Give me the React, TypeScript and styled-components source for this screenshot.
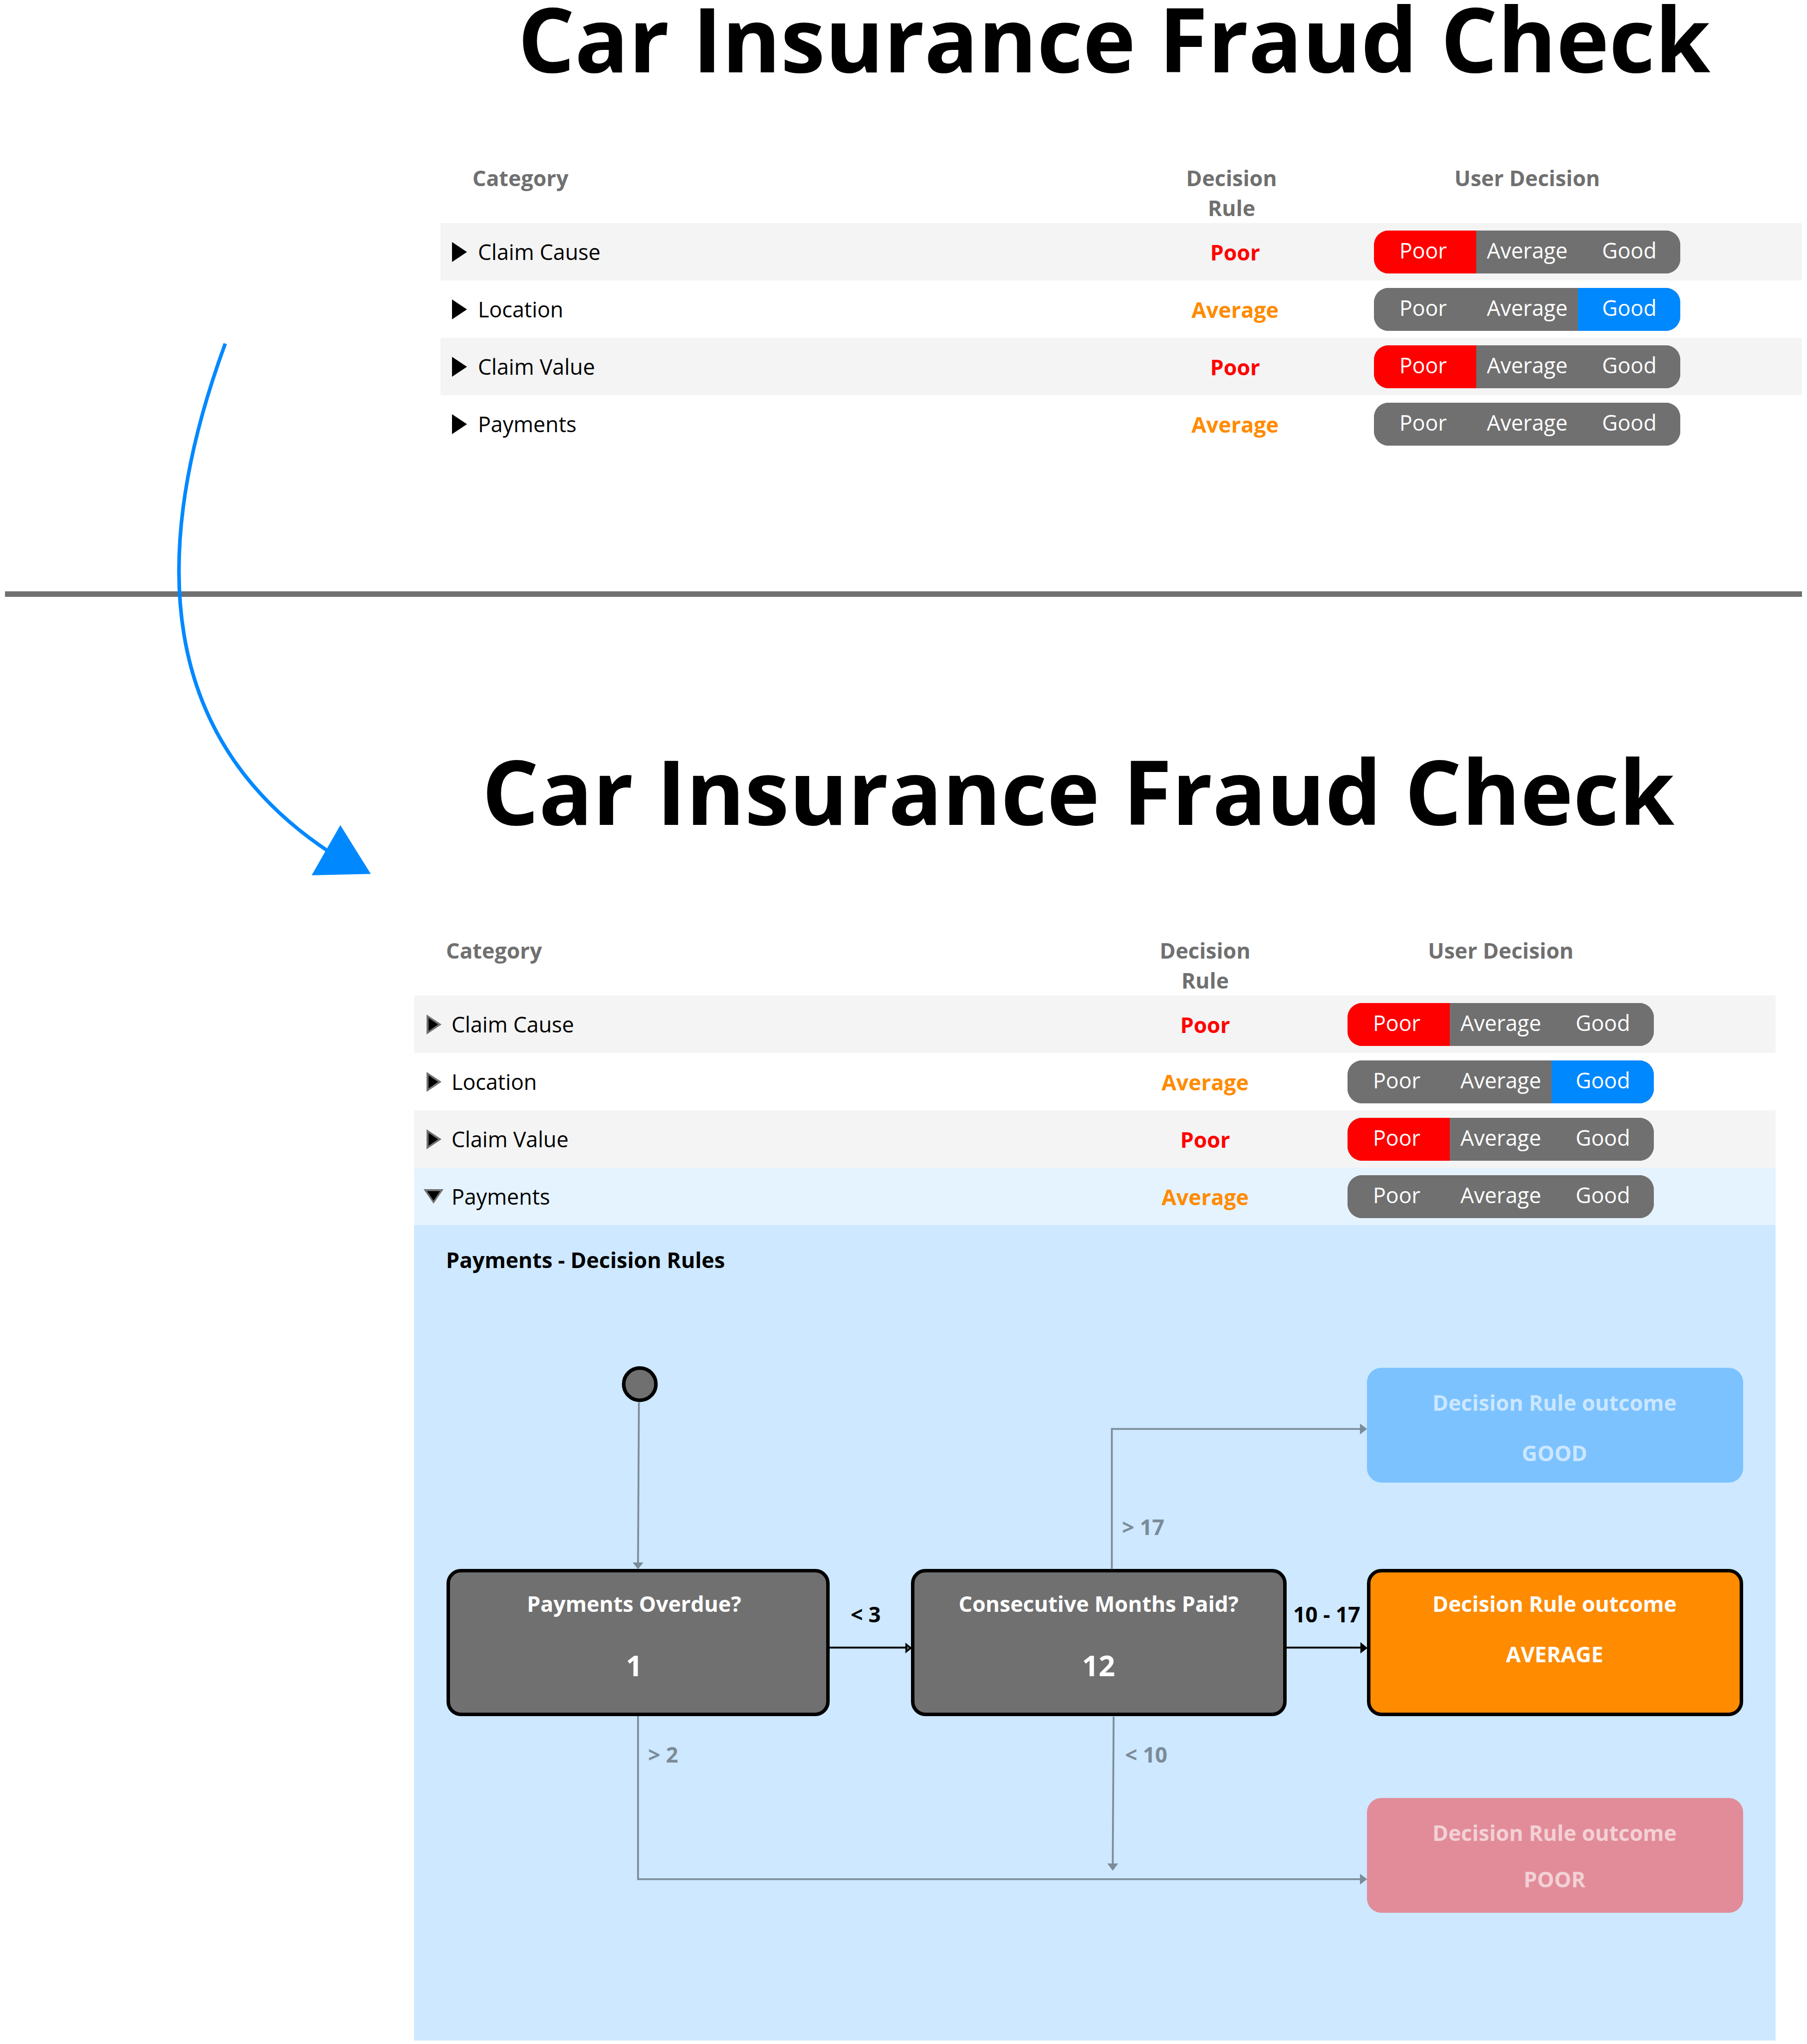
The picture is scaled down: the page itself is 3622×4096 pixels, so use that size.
import React, { useState } from 'react';
import styled, { createGlobalStyle } from 'styled-components';

const color = {
  ink: '#000000',
  grey: '#707070',
  stripe: '#f4f4f4',
  open: '#e5f3ff',
  panel: '#cde8ff',
  red: '#ff0000',
  orange: '#ff8b00',
  blue: '#0088ff',
  faded: '#7b8b99',
};

const Global = createGlobalStyle`
  *, *::before, *::after { box-sizing: border-box; }
  body {
    margin: 0;
    background: #ffffff;
    color: ${color.ink};
    font-family: "Open Sans", "Noto Sans", sans-serif;
    font-size: 43px;
    line-height: 60px;
  }
`;

const Page = styled.main`
  position: relative;
`;

const Screen = styled.section<{ $left: number; $right: number }>`
  padding-left: ${(p) => p.$left}px;
  padding-right: ${(p) => p.$right}px;
`;

const Title = styled.h1<{ $indent: number; $gap: number }>`
  margin: 0 0 ${(p) => p.$gap}px ${(p) => p.$indent}px;
  font-size: 179px;
  line-height: 152px;
  font-weight: 700;
  white-space: nowrap;
`;

const Divider = styled.hr`
  height: 11px;
  margin: 278px 10px 312px;
  border: 0;
  background: ${color.grey};
`;

const Table = styled.table`
  width: 100%;
  table-layout: fixed;
  border-collapse: collapse;
`;

const HeadCell = styled.th<{ $width: string; $align?: 'left' | 'center' }>`
  width: ${(p) => p.$width};
  padding: 2px 0 0 ${(p) => (p.$align === 'left' ? 64 : 0)}px;
  color: ${color.grey};
  font-weight: 700;
  text-align: ${(p) => p.$align ?? 'center'};
  vertical-align: top;
`;

const Row = styled.tr<{ $fill: string }>`
  height: 115px;
  background: ${(p) => p.$fill};
`;

const Cell = styled.td`
  padding: 0;
  vertical-align: middle;
`;

const RuleCell = styled(Cell)<{ $tone: string; $shift: number }>`
  padding: 2px 0 0 ${(p) => p.$shift}px;
  color: ${(p) => p.$tone};
  font-weight: 700;
  text-align: center;
`;

const DecisionBox = styled.div`
  width: 614px;
  margin-left: 171px;
`;

const Expander = styled.button`
  display: grid;
  grid-template-columns: 53px auto;
  align-items: center;
  padding: 0 0 0 22px;
  border: 0;
  background: none;
  color: inherit;
  font: inherit;
  cursor: pointer;
`;

const Marker = styled.svg`
  display: block;
  width: 34px;
  height: 40px;
  margin-left: 1px;
  overflow: visible;
`;

const Pill = styled.div`
  display: grid;
  grid-template-columns: repeat(3, 1fr);
  height: 86px;
  border-radius: 29px;
  overflow: hidden;
  background: ${color.grey};
`;

const Choice = styled.button<{ $fill: string }>`
  padding: 0 0 5px;
  border: 0;
  background: ${(p) => p.$fill};
  color: #ffffff;
  font: inherit;
  cursor: pointer;

  &:first-child {
    padding-right: 8px;
  }
`;

const PanelCell = styled.td`
  position: relative;
  height: 1634px;
  padding: 40px 64px;
  background: ${color.panel};
  vertical-align: top;
`;

const PanelTitle = styled.h2`
  margin: 0;
  font-size: 43px;
  line-height: 60px;
  font-weight: 700;
`;

const Wires = styled.svg`
  position: absolute;
  inset: 0;
  width: 100%;
  height: 100%;
`;

const Node = styled.div<{
  $x: number;
  $y: number;
  $w: number;
  $h: number;
  $fill: string;
  $edge: string;
  $text: string;
}>`
  position: absolute;
  left: ${(p) => p.$x}px;
  top: ${(p) => p.$y}px;
  width: ${(p) => p.$w}px;
  height: ${(p) => p.$h}px;
  padding-top: 33px;
  border: 7px solid ${(p) => p.$edge};
  border-radius: 29px;
  background: ${(p) => p.$fill};
  color: ${(p) => p.$text};
  font-weight: 700;
`;

const NodeText = styled.div<{ $gap: number }>`
  display: flex;
  flex-direction: column;
  align-items: center;
  gap: ${(p) => p.$gap}px;
  width: 738px;
`;

const Figure = styled.span`
  font-size: 58px;
  line-height: 80px;
`;

const WireLabel = styled.span<{ $x: number; $y: number; $tone: string }>`
  position: absolute;
  left: ${(p) => p.$x}px;
  top: ${(p) => p.$y}px;
  color: ${(p) => p.$tone};
  font-weight: 700;
  white-space: nowrap;
`;

const Sweep = styled.svg`
  position: absolute;
  left: 340px;
  top: 670px;
  width: 420px;
  height: 1100px;
`;

type Rating = 'Poor' | 'Average' | 'Good';
const ratings: Rating[] = ['Poor', 'Average', 'Good'];
const tone: Record<Rating, string> = {
  Poor: color.red,
  Average: color.orange,
  Good: color.blue,
};

interface Category {
  name: string;
  rule: Rating;
  user?: Rating;
}

const categories: Category[] = [
  { name: 'Claim Cause', rule: 'Poor', user: 'Poor' },
  { name: 'Location', rule: 'Average', user: 'Good' },
  { name: 'Claim Value', rule: 'Poor', user: 'Poor' },
  { name: 'Payments', rule: 'Average' },
];

function Triangle({ open, outlined }: { open: boolean; outlined: boolean }) {
  if (open) {
    return (
      <Marker viewBox="0 0 34 40" aria-hidden="true">
        <path d="M-4 5H36L16 34Z" fill={color.grey} />
        <path d="M3 9H29L16 28Z" fill={color.ink} />
      </Marker>
    );
  }
  return (
    <Marker viewBox="0 0 34 40" aria-hidden="true">
      {outlined ? (
        <>
          <path d="M2 0L32 20L2 40Z" fill={color.grey} />
          <path d="M6 7L25 20L6 33Z" fill={color.ink} />
        </>
      ) : (
        <path d="M0 0L30 20L0 40Z" fill={color.ink} />
      )}
    </Marker>
  );
}

function DecisionPicker({ name, initial }: { name: string; initial?: Rating }) {
  const [picked, setPicked] = useState<Rating | undefined>(initial);
  return (
    <Pill role="group" aria-label={`User decision for ${name}`}>
      {ratings.map((r) => (
        <Choice
          key={r}
          type="button"
          aria-pressed={picked === r}
          $fill={picked === r ? tone[r] : color.grey}
          onClick={() => setPicked(r)}
        >
          {r}
        </Choice>
      ))}
    </Pill>
  );
}

function Outcome({ y, h, fill, edge, text, gap, label }: {
  y: number; h: number; fill: string; edge: string; text: string; gap: number; label: string;
}) {
  return (
    <Node $x={1910} $y={y} $w={754} $h={h} $fill={fill} $edge={edge} $text={text}>
      <NodeText $gap={gap}>
        <span>Decision Rule outcome</span>
        <span>{label}</span>
      </NodeText>
    </Node>
  );
}

function Question({ x, w, title, value }: { x: number; w: number; title: string; value: string }) {
  return (
    <Node $x={x} $y={689} $w={w} $h={295} $fill={color.grey} $edge={color.ink} $text="#ffffff">
      <NodeText $gap={53}>
        <span>{title}</span>
        <Figure>{value}</Figure>
      </NodeText>
    </Node>
  );
}

function PaymentRules() {
  return (
    <>
      <PanelTitle>Payments - Decision Rules</PanelTitle>
      <Question x={65} w={768} title="Payments Overdue?" value="1" />
      <Question x={996} w={753} title="Consecutive Months Paid?" value="12" />
      <Outcome y={286} h={230} fill="#7cc2ff" edge="#7cc2ff" text="#cbe7ff" gap={41} label="GOOD" />
      <Outcome y={689} h={295} fill={color.orange} edge={color.ink} text="#ffffff" gap={41} label="AVERAGE" />
      <Outcome y={1148} h={230} fill="#e28c99" edge="#e28c99" text="#f3d1d6" gap={33} label="POOR" />
      <Wires viewBox="924 2734 3040 1820" preserveAspectRatio="none" aria-hidden="true">
        <g stroke={color.faded} strokeWidth="4" fill="none">
          <path d="M1426 3130L1424 3488" />
          <path d="M2482 3502V3189H3038" />
          <path d="M1424 3830V4194H3038" />
          <path d="M2486 3831L2484 4160" />
        </g>
        <g fill={color.faded}>
          <path d="M1412 3487H1436L1424 3502Z" />
          <path d="M3036 3177V3201L3052 3189Z" />
          <path d="M3036 4182V4206L3052 4194Z" />
          <path d="M2472 4159H2496L2484 4175Z" />
        </g>
        <path d="M1852 3677H2022M2872 3677H3040" stroke={color.ink} strokeWidth="4" />
        <path d="M2021 3666V3690L2036 3678Z" fill={color.ink} />
        <path d="M2025 3674V3682L2030 3678Z" fill={color.grey} />
        <path d="M3037 3665V3690L3053 3678Z" fill={color.ink} />
        <circle cx="1428" cy="3089" r="36" fill={color.grey} stroke={color.ink} strokeWidth="8" />
      </Wires>
      <WireLabel $x={875} $y={750} $tone={color.ink}>&lt; 3</WireLabel>
      <WireLabel $x={1762} $y={750} $tone={color.ink}>10 - 17</WireLabel>
      <WireLabel $x={1419} $y={575} $tone={color.faded}>&gt; 17</WireLabel>
      <WireLabel $x={1425} $y={1031} $tone={color.faded}>&lt; 10</WireLabel>
      <WireLabel $x={469} $y={1031} $tone={color.faded}>&gt; 2</WireLabel>
    </>
  );
}

function CheckTable({ initiallyOpen, outlined, ruleShift }: {
  initiallyOpen?: string; outlined: boolean; ruleShift: number;
}) {
  const [open, setOpen] = useState<string | undefined>(initiallyOpen);
  return (
    <Table>
      <thead>
        <tr>
          <HeadCell scope="col" $width="53.9%" $align="left">Category</HeadCell>
          <HeadCell scope="col" $width="8.4%">Decision Rule</HeadCell>
          <HeadCell scope="col" $width="37.7%"><DecisionBox>User Decision</DecisionBox></HeadCell>
        </tr>
      </thead>
      <tbody>
        {categories.map((c, i) => {
          const isOpen = open === c.name;
          const fill = isOpen ? color.open : i % 2 === 0 ? color.stripe : 'transparent';
          return (
            <React.Fragment key={c.name}>
              <Row $fill={fill}>
                <Cell>
                  <Expander
                    type="button"
                    aria-expanded={isOpen}
                    onClick={() => c.name === 'Payments' && setOpen(isOpen ? undefined : c.name)}
                  >
                    <Triangle open={isOpen} outlined={outlined} />
                    {c.name}
                  </Expander>
                </Cell>
                <RuleCell $tone={tone[c.rule]} $shift={ruleShift}>{c.rule}</RuleCell>
                <Cell>
                  <DecisionBox><DecisionPicker name={c.name} initial={c.user} /></DecisionBox>
                </Cell>
              </Row>
              {isOpen && (
                <tr>
                  <PanelCell colSpan={3}><PaymentRules /></PanelCell>
                </tr>
              )}
            </React.Fragment>
          );
        })}
      </tbody>
    </Table>
  );
}

export default function App() {
  return (
    <Page>
      <Global />
      <Screen $left={883} $right={10}>
        <Title $indent={155} $gap={173}>Car Insurance Fraud Check</Title>
        <CheckTable outlined={false} ruleShift={14} />
      </Screen>
      <Divider />
      <Screen $left={830} $right={63}>
        <Title $indent={136} $gap={213}>Car Insurance Fraud Check</Title>
        <CheckTable initiallyOpen="Payments" outlined ruleShift={0} />
      </Screen>
      <Sweep viewBox="378.8 746.4 467.9 1225.4" aria-hidden="true">
        <path d="M503 767Q212 1560 740 1905" fill="none" stroke={color.blue} strokeWidth="8" />
        <path d="M760 1842L696 1954L828 1951Z" fill={color.blue} />
      </Sweep>
    </Page>
  );
}
